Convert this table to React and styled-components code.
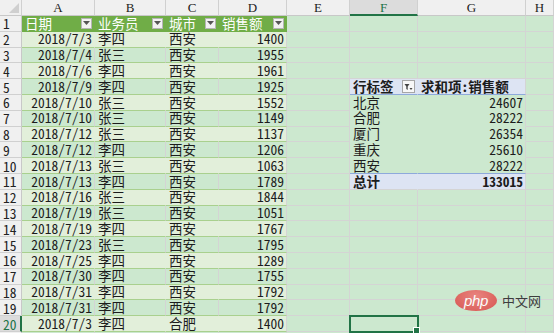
import React from 'react';
import styled, { createGlobalStyle, css } from 'styled-components';

const GlobalStyle = createGlobalStyle`
  html, body {
    margin: 0;
    padding: 0;
    background: #cce8cf;
    overflow: hidden;
  }
`;

const GRID = '#d4d4d4';
const BAND = '#e2efda';
const EYE = '#cce8cf';
const TABLE_LINE = '#a9d08e';
const PIVOT_FILL = '#dde4f3';
const PIVOT_LINE = '#8ea9db';
const SELECT = '#217346';

const Page = styled.div`
  position: relative;
  width: 554px;
  height: 333px;
  overflow: hidden;
  font-family: "Noto Sans Mono CJK SC", "Noto Sans CJK SC", monospace;
  font-size: 13.5px;
  color: #1c1c1c;
`;

const Sheet = styled.div`
  display: grid;
  grid-template-columns: 22px 73px 71px 53px 68px 63px 68px 108px 1fr;
  grid-template-rows: 16px repeat(21, 15.8px);
`;

const Corner = styled.div`
  position: relative;
  background: #f0f0f0;
  border-right: 1px solid #d0d0d0;
  border-bottom: 1px solid #c8c8c8;
  box-sizing: border-box;

  &::after {
    content: "";
    position: absolute;
    right: 2px;
    bottom: 2px;
    border-style: solid;
    border-width: 0 0 10px 10px;
    border-color: transparent transparent #cfcfcf transparent;
  }
`;

const ColHead = styled.div`
  display: flex;
  align-items: center;
  justify-content: center;
  box-sizing: border-box;
  background: ${(p) => (p.$active ? '#dcdcdc' : '#f0f0f0')};
  border-right: 1px solid #d0d0d0;
  border-bottom: ${(p) => (p.$active ? `2px solid ${SELECT}` : '1px solid #c8c8c8')};
  font-family: "Liberation Serif", "Noto Sans CJK SC", serif;
  font-size: 13px;
  color: ${(p) => (p.$active ? SELECT : '#222')};
  line-height: 1;
`;

const RowHead = styled.div`
  display: flex;
  align-items: center;
  box-sizing: border-box;
  padding-left: 3px;
  background: ${(p) => (p.$active ? '#dcdcdc' : '#f0f0f0')};
  border-right: ${(p) => (p.$active ? `2px solid ${SELECT}` : '1px solid #c8c8c8')};
  border-bottom: 1px solid #d0d0d0;
  color: ${(p) => (p.$active ? SELECT : '#222')};
  font-size: 13.5px;
`;

const Cell = styled.div`
  position: relative;
  display: flex;
  align-items: center;
  justify-content: ${(p) => (p.$align === 'right' ? 'flex-end' : 'flex-start')};
  box-sizing: border-box;
  padding: 0 2px 0 3px;
  white-space: nowrap;
  background: ${(p) => p.$bg || 'transparent'};
  border-right: 1px solid ${(p) => p.$right || GRID};
  border-bottom: 1px solid ${(p) => p.$bottom || GRID};
  font-weight: ${(p) => (p.$bold ? 700 : 400)};
  color: ${(p) => p.$color || 'inherit'};
  line-height: 1;
  ${(p) =>
    p.$header &&
    css`
      justify-content: space-between;
    `}
  ${(p) =>
    p.$selected &&
    css`
      outline: 2px solid ${SELECT};
      outline-offset: -1px;
      z-index: 2;
    `}
`;

const DropBtn = styled.span`
  display: inline-flex;
  align-items: center;
  justify-content: center;
  width: 11px;
  height: 11px;
  box-sizing: border-box;
  background: #f2f2f2;
  border: 1px solid #b5b5b5;
  flex-shrink: 0;
`;

const FilterBtn = styled(DropBtn)`
  width: 13px;
  height: 13px;
  background: #f7f7f7;
  border-color: #a6a6a6;
`;

const Handle = styled.span`
  position: absolute;
  right: -3px;
  bottom: -3px;
  width: 5px;
  height: 5px;
  background: ${SELECT};
  border: 1px solid #fff;
`;

const Watermark = styled.div`
  position: absolute;
  left: 455px;
  top: 290px;
  display: flex;
  align-items: center;
  gap: 5px;
`;

const PhpBadge = styled.span`
  display: inline-flex;
  align-items: center;
  justify-content: center;
  width: 42px;
  height: 21px;
  border-radius: 50%;
  background: radial-gradient(ellipse at 50% 30%, #ec7d79 0%, #dc5451 80%);
  color: #fff;
  font-family: "Liberation Sans", Arial, sans-serif;
  font-style: italic;
  font-size: 15px;
  letter-spacing: -0.3px;
  opacity: 0.92;
`;

const SiteName = styled.span`
  font-family: "Noto Sans CJK SC", sans-serif;
  font-size: 13px;
  color: #3d3d3d;
`;

const Caret = () => (
  <svg width="7" height="4" viewBox="0 0 7 4">
    <path d="M0 0h7L3.5 4z" fill="#555" />
  </svg>
);

const FilterIcon = () => (
  <svg width="9" height="8" viewBox="0 0 9 8">
    <path d="M0.5 1h5L3.7 3.5V7L2.3 6V3.5z" fill="#444" />
    <path d="M5.5 5h3L7 7z" fill="#444" />
  </svg>
);

const rows = [
  ['2018/7/3', '李四', '西安', 1400],
  ['2018/7/4', '张三', '西安', 1955],
  ['2018/7/6', '李四', '西安', 1961],
  ['2018/7/9', '李四', '西安', 1925],
  ['2018/7/10', '张三', '西安', 1552],
  ['2018/7/10', '张三', '西安', 1149],
  ['2018/7/12', '张三', '西安', 1137],
  ['2018/7/12', '李四', '西安', 1206],
  ['2018/7/13', '张三', '西安', 1063],
  ['2018/7/13', '李四', '西安', 1789],
  ['2018/7/16', '张三', '西安', 1844],
  ['2018/7/19', '张三', '西安', 1051],
  ['2018/7/19', '李四', '西安', 1767],
  ['2018/7/23', '张三', '西安', 1795],
  ['2018/7/25', '李四', '西安', 1289],
  ['2018/7/30', '李四', '西安', 1755],
  ['2018/7/31', '李四', '西安', 1792],
  ['2018/7/31', '李四', '西安', 1792],
  ['2018/7/3', '李四', '合肥', 1400],
];

const pivot = [
  ['北京', 24607],
  ['合肥', 28222],
  ['厦门', 26354],
  ['重庆', 25610],
  ['西安', 28222],
];

const letters = ['A', 'B', 'C', 'D', 'E', 'F', 'G', 'H'];
const headers = ['日期', '业务员', '城市', '销售额'];

function tableCells(r) {
  if (r === 1) {
    return headers.map((h, i) => (
      <Cell key={i} $header $bg="#70ad47" $right="#70ad47" $bottom="#70ad47" $color="#fff">
        <span>{h}</span>
        <DropBtn>
          <Caret />
        </DropBtn>
      </Cell>
    ));
  }
  const d = rows[r - 2];
  const banded = r % 2 === 0;
  const bg = banded ? BAND : undefined;
  return d.map((v, i) => (
    <Cell
      key={i}
      $bg={bg}
      $right={banded && i < 3 ? BAND : GRID}
      $bottom={TABLE_LINE}
      $align={i === 0 || i === 3 ? 'right' : 'left'}
    >
      {v}
    </Cell>
  ));
}

function pivotCells(r) {
  if (r === 5) {
    return [
      <Cell key="f" $header $bold $bg={PIVOT_FILL} $right={PIVOT_FILL} $bottom={PIVOT_LINE}>
        <span>行标签</span>
        <FilterBtn>
          <FilterIcon />
        </FilterBtn>
      </Cell>,
      <Cell key="g" $bold $bg={PIVOT_FILL} $bottom={PIVOT_LINE}>
        求和项:销售额
      </Cell>,
    ];
  }
  if (r >= 6 && r <= 10) {
    const [city, sum] = pivot[r - 6];
    const last = r === 10;
    return [
      <Cell key="f" $bg={EYE} $right={EYE} $bottom={last ? PIVOT_LINE : EYE}>
        {city}
      </Cell>,
      <Cell key="g" $bg={EYE} $bottom={last ? PIVOT_LINE : EYE} $align="right">
        {sum}
      </Cell>,
    ];
  }
  if (r === 11) {
    return [
      <Cell key="f" $bold $bg={PIVOT_FILL} $right={PIVOT_FILL}>
        总计
      </Cell>,
      <Cell key="g" $bold $bg={PIVOT_FILL} $align="right">
        133015
      </Cell>,
    ];
  }
  return null;
}

function SheetRow({ r }) {
  const inTable = r <= 20;
  const pv = pivotCells(r);
  return (
    <>
      <RowHead $active={r === 20}>{r}</RowHead>
      {inTable ? tableCells(r) : [0, 1, 2, 3].map((i) => <Cell key={i} />)}
      <Cell />
      {pv || (
        <>
          <Cell $selected={r === 20}>{r === 20 && <Handle />}</Cell>
          <Cell />
        </>
      )}
      <Cell />
    </>
  );
}

export default function App() {
  const rowNums = Array.from({ length: 21 }, (_, i) => i + 1);
  return (
    <Page>
      <GlobalStyle />
      <Sheet>
        <Corner />
        {letters.map((l) => (
          <ColHead key={l} $active={l === 'F'}>
            {l}
          </ColHead>
        ))}
        {rowNums.map((r) => (
          <SheetRow key={r} r={r} />
        ))}
      </Sheet>
      <Watermark>
        <PhpBadge>php</PhpBadge>
        <SiteName>中文网</SiteName>
      </Watermark>
    </Page>
  );
}
